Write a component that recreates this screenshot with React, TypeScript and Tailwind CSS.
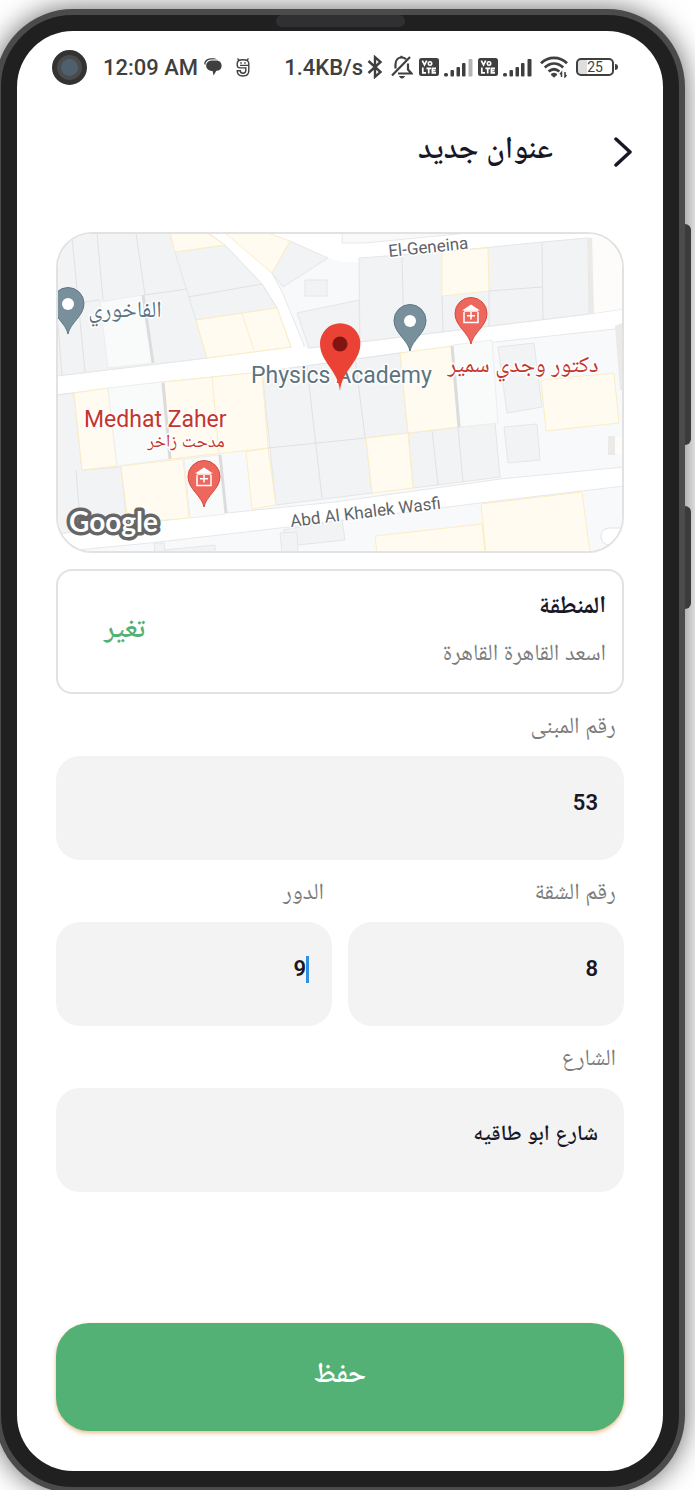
import React, { useState } from "react";

const FONT = "font-[Roboto,'Noto_Naskh_Arabic_UI','DejaVu_Sans',sans-serif]";

function ChatIcon() {
  return (
    <svg width="18" height="18" viewBox="0 0 18 18" fill="#3f3f3f" aria-hidden="true">
      <path d="M3 1.2C6-.3 11 0 13.5 1.3L6.5 1.600C3 2 1.500 4.500 1.300 7.500L.2 5.500C.4 3.500 1.400 2 3 1.200Z" />
      <path d="M8 2.600H12.300C15.500 2.600 17.600 4.800 17.600 7.700C17.600 10.600 15.400 12.800 12.300 12.800L9.600 17.400L8.600 13C5 12.800 2.200 11 2.200 7.700C2.200 4.700 4.600 2.600 8 2.600Z" />
    </svg>
  );
}

function CatIcon() {
  return (
    <svg width="14" height="19" viewBox="0 0 14 19" fill="none" stroke="#3f3f3f" strokeWidth="1.400" aria-hidden="true">
      <path d="M12.800 7.400V5.500C12.800 3 10.500 1.800 7 1.800S1.200 3 1.200 5.500V7C1.200 9 2.500 9.900 4 9.900H9.800V12.500C9.800 14.500 8.800 15.200 7 15.200S4.300 14.500 4.300 12.800H1.200C1.200 16.500 3.500 18 7 18S12.800 16.500 12.800 12.500V7.400H4" />
      <path d="M1.500 .5L3.200 2.400M12.500 .5L10.800 2.400M4.300 5H5.800M8.200 5H9.700" />
    </svg>
  );
}

function BluetoothIcon() {
  return (
    <svg width="16" height="24" viewBox="0 0 16 24" fill="none" stroke="#3f3f3f" strokeWidth="2.400" aria-hidden="true">
      <path d="M1.500 6L13.500 17L8 21.800V2.200L13.500 7L1.500 18" />
    </svg>
  );
}

function MutedBellIcon() {
  return (
    <svg width="22" height="24" viewBox="0 0 22 24" fill="none" stroke="#3f3f3f" strokeWidth="2.200" aria-hidden="true">
      <path d="M4.500 13.500V9.500C4.500 5.500 7 2.500 10.500 2.500C12.500 2.500 14 3.200 15 4.300M17 8.500V14.500L20.500 18.500H7" />
      <path d="M1 20.500L19 2" />
      <path d="M8.500 21.500C9.500 23.500 12.500 23.500 13.500 21.500Z" fill="#3f3f3f" strokeWidth="1" />
      <path d="M10.500 .8V3" />
    </svg>
  );
}

function VolteIcon() {
  return (
    <svg width="20" height="18" viewBox="0 0 20 18" aria-hidden="true">
      <rect width="20" height="18" rx="2.500" fill="#3f3f3f" />
      <path
        d="M3.300 2.700L5.500 7L7.700 2.700M3.800 9.500V14.800H7M7.400 10.300H12M9.700 10.300V15.600M17 10.300H13.400V14.800H17M13.400 12.600H16.500"
        fill="none"
        stroke="#fff"
        strokeWidth="1.700"
      />
      <circle cx="11" cy="5.500" r="1.700" fill="none" stroke="#fff" strokeWidth="1.600" />
    </svg>
  );
}

function SignalIcon({ weak }: { weak?: boolean }) {
  return (
    <svg width="29" height="19" viewBox="0 0 29 19" fill="#3f3f3f" aria-hidden="true">
      <rect x="0" y="15" width="4" height="3.500" rx="1.500" />
      <rect x="6.500" y="12" width="3.500" height="6.500" rx="1" />
      <rect x="12.500" y="9" width="3.500" height="9.500" rx="1" />
      <rect x="18" y="5" width="3.500" height="13.500" rx="1" />
      <rect x="24.500" y="1" width="4" height="17.500" rx="1" fill={weak ? "#b4b4b4" : "#3f3f3f"} />
    </svg>
  );
}

function WifiIcon() {
  return (
    <svg width="28" height="22" viewBox="0 0 28 22" fill="none" stroke="#3f3f3f" strokeWidth="2.800" aria-hidden="true">
      <path d="M1 7.200C8.500 .1 19.500 .1 27 7.200" />
      <path d="M4.800 11.500C10.500 6.300 17.500 6.300 23.200 11.500" />
      <path d="M8.600 15.500C12 12.700 16 12.700 19.400 15.500" />
      <path d="M11 18.500C13 16.800 15 16.800 17 18.500L14 21.200Z" fill="#3f3f3f" strokeWidth="1" />
      <path d="M21.500 21V16.500L20 18.300M25 16V20.800L26.500 19" strokeWidth="1.500" />
    </svg>
  );
}

function StatusBar() {
  return (
    <div dir="ltr" className="flex h-[72px] items-center justify-between pl-[35px] pr-[45px] text-[22px] font-medium text-[#3f3f3f]">
      <div className="flex items-center">
        <span className="size-[35px] rounded-full border-[5px] border-[#333] bg-[#4b4b4b] p-1">
          <span className="block size-full rounded-full bg-[#4e606d]" />
        </span>
        <span className="ml-4 mr-1.5">12:09 AM</span>
        <ChatIcon />
        <span className="ml-3.5">
          <CatIcon />
        </span>
      </div>
      <div className="flex items-center">
        <span className="mr-1">1.4KB/s</span>
        <BluetoothIcon />
        <span className="ml-2 mr-1.5">
          <MutedBellIcon />
        </span>
        <VolteIcon />
        <span className="mx-[5px]">
          <SignalIcon weak />
        </span>
        <VolteIcon />
        <span className="ml-[5px] mr-2">
          <SignalIcon />
        </span>
        <WifiIcon />
        <span className="ml-2 flex items-center">
          <span className="flex h-[18px] w-[38px] items-center justify-center rounded-[5px] border-2 border-[#3f3f3f] bg-linear-to-r from-[#dedede] from-25% to-white to-25% text-[14px] font-normal">
            25
          </span>
          <span className="ml-px h-1.5 w-[3px] rounded-r-sm bg-[#3f3f3f]" />
        </span>
      </div>
    </div>
  );
}

const GREY = [
  "57,233 170,233 196,320 207,358 57,376",
  "175,252 225,245 262,284 277,308 196,320",
  "290,241 328,258 283,287 272,273",
  "305,280 327,280 327,296 305,296",
  "297,313 359,300 360,342 309,348",
  "359,258 442,252 542,242 588,238 589,314 360,342",
  "57,395 74,393 82,470 121,467 127,525 57,534",
  "262,372 400,353 408,433 366,438 372,493 276,505",
  "408,433 495,423 500,477 413,488",
  "498,347 534,343 542,407 507,413",
  "504,427 537,424 540,460 508,463",
  "154,543 164,543 165,553 155,553",
  "165,550 215,545 215,553 165,553",
  "283,530 342,520 345,540 298,545",
  "280,533 297,532 298,553 282,553",
];

const YELLOW = [
  "170,233 207,233 225,245 175,252",
  "196,320 277,308 291,347 207,358",
  "225,233 268,233 290,241 272,273",
  "442,252 488,248 489,291 442,296",
  "74,393 108,388 117,466 82,470",
  "164,382 262,372 268,448 171,459",
  "121,466 183,459 189,518 128,523",
  "246,452 268,448 276,505 252,509",
  "400,353 452,346 459,427 408,433",
  "366,438 408,433 413,488 372,493",
  "541,380 614,373 619,423 546,431",
  "481,504 582,492 590,553 486,553",
  "375,536 482,524 485,553 377,553",
];

const PALE = [
  "100,302 142,295 153,363 108,368",
  "108,388 162,382 170,459 117,466",
  "184,459 220,455 226,514 190,518",
  "453,345 492,340 498,423 460,427",
];

function PlacePin({ x, y, clinic }: { x: number; y: number; clinic?: boolean }) {
  return (
    <g transform={`translate(${x} ${y})`}>
      <path
        d="M0 0C-2-11-16-18-16-30.500A16 16 0 0 1 16-30.500C16-18 2-11 0 0Z"
        fill={clinic ? "#ee675c" : "#78909c"}
        stroke={clinic ? "#d9473c" : "#5f7884"}
        strokeWidth="1"
      />
      {clinic ? (
        <g fill="none" stroke="#fff" strokeWidth="1.500">
          <path d="M-7-32V-21.500H7V-32" />
          <path d="M-9-33.500L0-39.500L9-33.500Z" fill="#fff" stroke="none" />
          <path d="M-7-33H7M0-32V-24.500M-4-28.200H4" />
        </g>
      ) : (
        <circle cy="-30" r="6" fill="#fff" />
      )}
    </g>
  );
}

function MapPreview() {
  return (
    <div dir="ltr" className="overflow-hidden rounded-[36px] border-2 border-[#e2e2e2]">
      <svg viewBox="58 234 564 317" className="block w-full" role="img" aria-label="Map">
        <rect x="57" y="233" width="566" height="320" fill="#f8f9fb" />
        <g fill="#fff" stroke="#e6e8ea" strokeWidth="1">
          <path d="M207 232L225 245L262 284L277 308L291 347L302 352L304 345L283 294L272 273L225 232Z" />
          <path d="M56 376L207 358L291 347L309 348L360 342L589 314L624 309V328L495 342L400 353L262 372L162 382L56 395Z" />
          <path d="M56 534L127 525L227 513L335 502L500 479L624 467V486L480 503L280 528L150 543L56 552Z" />
        </g>
        <path d="M268 233L290 241L328 258L342 262L359 262V258L442 252L542 242L622 234V230H268Z" fill="#fff" />
        <path d="M342 233H468L365 243H342Z" fill="#f8f9fb" stroke="#e6e8ea" />
        <path d="M293 344L309 348L303 356L288 356Z" fill="#fff" />
        <g fill="#f1f3f4" stroke="#e4e6e8" strokeWidth="1">
          {GREY.map((p) => (
            <polygon key={p} points={p} />
          ))}
        </g>
        <g fill="#fffbf0" stroke="#fbedc4" strokeWidth="1">
          {YELLOW.map((p) => (
            <polygon key={p} points={p} />
          ))}
        </g>
        <g fill="#f9fbfb" stroke="#eeeeec" strokeWidth="1">
          {PALE.map((p) => (
            <polygon key={p} points={p} />
          ))}
        </g>
        <path
          d="M72 237L85 372M97 233L103 300M136 233L145 295M57 305L100 300M145 295L187 289M58 325L62 375M188 297L262 284M402 257L404 337M442 296L443 331M489 291V326M542 242L543 320M489 291L542 287M76 470L80 520M268 448L366 438M307 367L322 498M355 358L365 437M432 430L438 485M458 427L463 482"
          fill="none"
          stroke="#dfe1e3"
        />
        <path d="M242 314L254 350M212 377L219 453" fill="none" stroke="#fbedc4" />
        <path d="M143 295L153 363M163 383L170 459M220 455L226 513M452 346L459 427" fill="none" stroke="#dcdcdc" strokeWidth="3" />
        <path d="M593 237L622 234V309L594 313Z" fill="#fdfcfa" />
        <path d="M588 238H592L594 313L589 314ZM615 326L622 323V390H620ZM608 436H615V455H608Z" fill="#eceae6" />
        <path d="M615 437H622V454H615Z" fill="#fdfcfa" />
        <rect x="601" y="528" width="40" height="17" rx="8" fill="#fff" stroke="#e0e2e4" />

        <PlacePin x={68} y={334} />
        <PlacePin x={410} y={351} />
        <PlacePin x={471} y={344} clinic />
        <PlacePin x={204} y={507} clinic />

        <g
          fontFamily="Roboto, 'Noto Naskh Arabic UI', 'DejaVu Sans', sans-serif"
          stroke="#fff"
          strokeWidth="3"
          strokeLinejoin="round"
          paintOrder="stroke"
        >
          <g fill="#5f6368" fontSize="17">
            <text transform="translate(389 257) rotate(-6)">El-Geneina</text>
            <text transform="translate(291 527) rotate(-7)">Abd Al Khalek Wasfi</text>
          </g>
          <g fill="#5b7482" fontSize="23">
            <text x="251" y="383">Physics Academy</text>
            <text x="125" y="320" textAnchor="middle">الفاخوري</text>
          </g>
          <g fill="#c5352d" fontSize="23">
            <text x="84" y="427">Medhat Zaher</text>
            <text x="186" y="449" fontSize="18" textAnchor="middle">مدحت زاخر</text>
            <text x="523" y="375" textAnchor="middle">دكتور وجدي سمير</text>
          </g>
        </g>
        <path d="M340 391C338 370 320 362 320 343.500A20.200 20.200 0 0 1 360.400 343.500C360.400 362 342 370 340 391Z" fill="#ea4335" />
        <circle cx="340" cy="344" r="7.500" fill="#811411" />
        <text
          x="69"
          y="532"
          fontFamily="Lato, sans-serif"
          fontSize="28"
          fontWeight="700"
          fill="#fff"
          stroke="#666"
          strokeWidth="7"
          strokeLinejoin="round"
          paintOrder="stroke"
        >
          Google
        </text>
      </svg>
    </div>
  );
}

interface FieldProps {
  id: string;
  label: string;
  initial: string;
  active?: boolean;
}

function Field({ id, label, initial, active }: FieldProps) {
  const [value, setValue] = useState(initial);
  return (
    <div className="min-w-0 flex-1">
      <label htmlFor={id} className="flex h-[62px] items-center px-2 pt-2 text-[23px] text-[#7c7c7c]">
        {label}
      </label>
      <div className="relative">
        <input
          id={id}
          value={value}
          onChange={(e) => setValue(e.target.value)}
          className="block h-[104px] w-full rounded-3xl bg-[#f3f3f3] px-[26px] pb-3 text-[22px] font-semibold text-[#181725] outline-none"
        />
        {active && <span className="absolute right-[23px] top-[34px] h-[27px] w-[3px] bg-[#2f8fe0]" />}
      </div>
    </div>
  );
}

export default function App() {
  return (
    <div className={`overflow-hidden bg-white pt-[9px] ${FONT}`}>
      <div className="relative -mb-[3px] -ml-[5px] mr-2.5 rounded-[78px] border-[6px] border-[#4b4b4b] bg-[#202020] p-4 shadow-[0_0_28px_rgba(0,0,0,0.6)]">
        <span className="absolute left-[275px] top-0 h-3 w-[129px] rounded-full bg-[#303032]" />
        <span className="absolute -right-3 top-[209px] h-[221px] w-1.5 rounded-r-md bg-[#3b3b3b]" />
        <span className="absolute -right-3 top-[491px] h-[103px] w-1.5 rounded-r-md bg-[#3b3b3b]" />
        <main dir="rtl" className="rounded-[56px] bg-white pb-10">
          <StatusBar />
          <header className="flex h-[98px] items-center gap-[60px] px-[30px] text-[#181725]">
            <button type="button" aria-label="رجوع">
              <svg width="20" height="30" viewBox="0 0 20 30" fill="none" stroke="currentColor" strokeWidth="3.500" strokeLinecap="round" strokeLinejoin="round">
                <path d="M3 2L17 15L3 28" />
              </svg>
            </button>
            <h1 className="text-[31px] font-semibold">عنوان جديد</h1>
          </header>
          <form className="px-[39px] pt-[31px]" onSubmit={(e) => e.preventDefault()}>
            <MapPreview />
            <section className="mt-4 flex h-[125px] items-center justify-between rounded-2xl border-2 border-[#e2e2e2] pl-[46px] pr-4">
              <div className="flex flex-col gap-4 pt-px">
                <h2 className="text-[24px] font-bold leading-8 text-[#181725]">المنطقة</h2>
                <p className="text-[23px] leading-8 text-[#7c7c7c]">اسعد القاهرة القاهرة</p>
              </div>
              <button type="button" className="text-[28px] font-semibold text-[#53b175]">
                تغير
              </button>
            </section>
            <Field id="building" label="رقم المبنى" initial="53" />
            <div className="flex gap-4">
              <Field id="apartment" label="رقم الشقة" initial="8" />
              <Field id="floor" label="الدور" initial="9" active />
            </div>
            <Field id="street" label="الشارع" initial="شارع ابو طاقيه" />
            <button
              type="submit"
              className="mt-[131px] block h-[108px] w-full rounded-[33px] bg-[#53b175] text-[28px] font-semibold text-white shadow-[0_2px_4px_rgba(222,160,90,0.7)]"
            >
              حفظ
            </button>
          </form>
        </main>
      </div>
    </div>
  );
}
